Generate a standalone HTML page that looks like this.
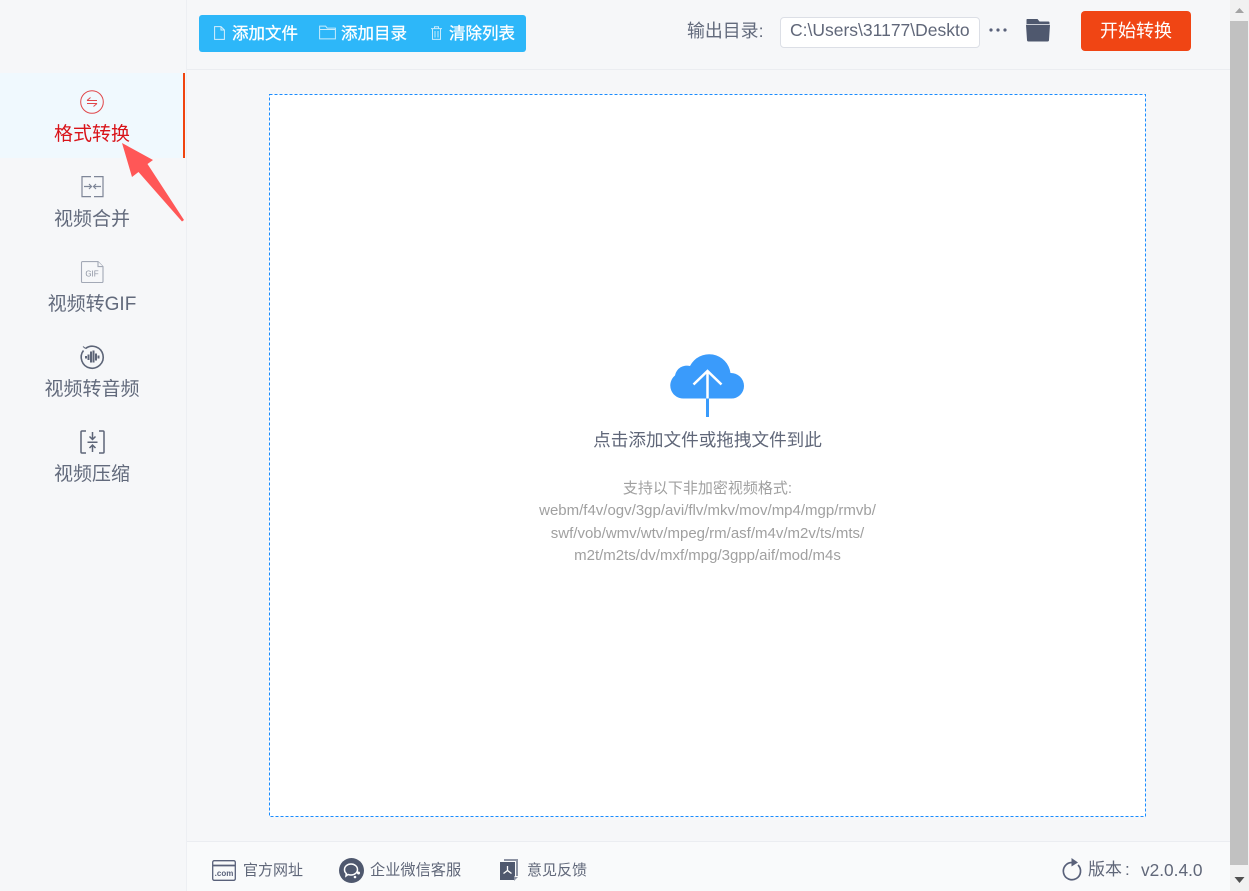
<!DOCTYPE html>
<html lang="zh-CN">
<head>
<meta charset="utf-8">
<title>格式转换</title>
<style>
html,body{margin:0;padding:0;width:1249px;height:891px;overflow:hidden;background:#f6f7f9}
body{position:relative;font-family:"Liberation Sans","Noto Sans CJK SC",sans-serif;color:#606779}
.a{position:absolute;white-space:nowrap}
.nav{position:absolute;left:0;width:184px;text-align:center;font-size:19px;line-height:26px;color:#626a7c}
.tb{position:absolute;white-space:nowrap;top:24px;font-size:16.500px;line-height:20px;color:#fff;-webkit-text-stroke:.3px #fff}
.ft{position:absolute;white-space:nowrap;top:861px;font-size:15px;line-height:20px;color:#606779}
svg{position:absolute;overflow:visible}
</style>
</head>
<body>
<!-- sidebar -->
<div class="a" style="left:186px;top:0;width:1px;height:891px;background:#edeff3"></div>
<div class="a" style="left:0;top:73px;width:183px;height:85px;background:#f0f9fe"></div>
<div class="a" style="left:183px;top:73px;width:2px;height:85px;background:#f0440f"></div>

<svg style="left:80px;top:90px" width="24" height="24" viewBox="0 0 24 24" fill="none" stroke="#e0474a" stroke-width="1"><circle cx="12" cy="12" r="11.300"/><path d="M7 10.500H17M7 10.500l3.500-3M17 13.500H7M17 13.500l-3.500 3"/></svg>
<div class="nav" style="top:122px;color:#d9141a">格式转换</div>

<svg style="left:81px;top:176px" width="23" height="22" viewBox="0 0 23 22" fill="none" stroke="#7e8698" stroke-width="1.200"><path d="M10 .6H1v20h9M13 .6h9v20h-9"/><path d="M3 10.500h7.500M8 8l2.500 2.500L8 13M20 10.500h-7.500M15 8l-2.500 2.500L15 13"/></svg>
<div class="nav" style="top:207px">视频合并</div>

<svg style="left:81px;top:261px" width="23" height="22" viewBox="0 0 23 22" fill="#f6f7f9" stroke="#a3a9b6" stroke-width="1.100"><path d="M1.500.6H17l5 5v14.900a1 1 0 0 1-1 1H1.500a1 1 0 0 1-1-1V1.600a1 1 0 0 1 1-1z"/><path d="M17 .6v5h5"/><text x="11" y="15.500" text-anchor="middle" font-family="Liberation Sans" font-size="8" fill="#8b92a1" stroke="none">GIF</text></svg>
<div class="nav" style="top:292px">视频转GIF</div>

<svg style="left:80px;top:345px" width="24" height="24" viewBox="0 0 24 24" fill="none" stroke="#5d6578" stroke-width="1.600"><path d="M5.500 3.500A11 11 0 1 1 3.500 5.500"/><path d="M3 1.500l2.500 2" stroke-width="1"/><path d="M6 11v2.500M8.500 9.500v5.500M11 6.500v11M13.500 5.500v12M16 8.500v7M18.500 10.500v3" stroke-width="2"/></svg>
<div class="nav" style="top:377px">视频转音频</div>

<svg style="left:80px;top:430px" width="25" height="24" viewBox="0 0 25 24" fill="none" stroke="#5d6578" stroke-width="1.500"><path d="M6 1H2a1 1 0 0 0-1 1v20a1 1 0 0 0 1 1h4M19 1h4a1 1 0 0 1 1 1v20a1 1 0 0 1-1 1h-4"/><path d="M12.500 2v7M9.500 6.500l3 3 3-3M12.500 22v-6.500M9.500 18l3-3 3 3M7.500 12.300h10"/></svg>
<div class="nav" style="top:462px">视频压缩</div>

<!-- arrow annotation -->
<svg style="left:0;top:0" width="200" height="240" viewBox="0 0 200 240"><path d="M122 143L153 160L147.500 164L184 220L182 221.500L138.500 172L132 177Z" fill="#ff5757"/></svg>

<!-- header -->
<div class="a" style="left:187px;top:69px;width:1043px;height:1px;background:#ebedf1"></div>
<div class="a" style="left:199px;top:15px;width:327px;height:37px;background:#2db7f9;border-radius:3px"></div>
<svg style="left:214px;top:26px" width="11" height="14" viewBox="0 0 11 14" fill="none" stroke="#d6f0fd" stroke-width="1"><path d="M.6.6h6.400l3.400 3.400v9.400H.6zM7 .6V4h3.400"/></svg>
<div class="tb" style="left:232px">添加文件</div>
<svg style="left:319px;top:25px" width="17" height="15" viewBox="0 0 17 15" fill="none" stroke="#c8ebfc" stroke-width="1"><path d="M.6 13.900V1.100h6l1.500 2h8.300v10.800zM.6 4.500h15.800"/></svg>
<div class="tb" style="left:341px">添加目录</div>
<svg style="left:431px;top:26px" width="11" height="14" viewBox="0 0 11 14" fill="none" stroke="#c8ebfc" stroke-width="1"><path d="M0 2.600h11M3.500 2.600V.8h4v1.800M1.500 3v10.400h8V3M4 5v6.500M7 5v6.500"/></svg>
<div class="tb" style="left:449px">清除列表</div>

<div class="a" style="left:687px;top:19px;font-size:17.900px;line-height:24px;color:#626a7c">输出目录:</div>
<div class="a" style="left:780px;top:17px;width:198px;height:29px;background:#fff;border:1px solid #dcdfe6;border-radius:4px"></div>
<div class="a" style="left:790px;top:18px;width:180px;overflow:hidden;font-size:17.500px;line-height:24px;color:#606779">C:\Users\31177\Deskto</div>
<svg style="left:989px;top:27px" width="18" height="5" viewBox="0 0 18 5" fill="#59617a"><circle cx="2" cy="3" r="1.600"/><circle cx="9" cy="3" r="1.600"/><circle cx="16" cy="3" r="1.600"/></svg>
<svg style="left:1025px;top:19px" width="26" height="23" viewBox="0 0 26 23"><path d="M2 0h10.500l2 2.500H23.500a1 1 0 0 1 1 1V5H1.500V.5z" fill="#4f586e"/><path d="M1 5.700h24l-1 15.300a1.500 1.500 0 0 1-1.500 1.500H3.500A1.500 1.500 0 0 1 2 21z" fill="#4f586e"/></svg>
<div class="a" style="left:1081px;top:11px;width:110px;height:40px;background:#f04514;border-radius:4px;text-align:center;font-size:18px;line-height:40px;color:#fff">开始转换</div>

<!-- drop area -->
<svg style="left:0;top:0" width="1249" height="891" viewBox="0 0 1249 891"><rect x="269.500" y="94.500" width="876" height="722" fill="#fff" stroke="#1a8cff" stroke-width="1" stroke-dasharray="3 2" shape-rendering="crispEdges"/></svg>
<svg style="left:670px;top:354px" width="75" height="64" viewBox="0 0 75 64"><path d="M14 44.500A13 13 0 0 1 5 21.500 12 12 0 0 1 20 12 21.500 21.500 0 0 1 60.500 19 13 13 0 0 1 74 32 12.500 12.500 0 0 1 61 44.500Z" fill="#3a9bfb"/><path d="M37.500 63V44" stroke="#3a9bfb" stroke-width="3" fill="none"/><path d="M37.500 44.500V17M23.500 30.500L37.500 17 51.500 30.500" stroke="#fff" stroke-width="2.500" fill="none"/></svg>
<div class="a" style="left:269px;top:429px;width:877px;text-align:center;font-size:17.600px;line-height:22px;color:#606779">点击添加文件或拖拽文件到此</div>
<div class="a" style="left:269px;top:478px;width:877px;text-align:center;font-size:15px;line-height:22.400px;color:#a0a0a0">支持以下非加密视频格式:<br>webm/f4v/ogv/3gp/avi/flv/mkv/mov/mp4/mgp/rmvb/<br>swf/vob/wmv/wtv/mpeg/rm/asf/m4v/m2v/ts/mts/<br>m2t/m2ts/dv/mxf/mpg/3gpp/aif/mod/m4s</div>

<!-- footer -->
<div class="a" style="left:187px;top:841px;width:1043px;height:50px;background:#f9fafb;border-top:1px solid #ebedf1;box-sizing:border-box"></div>
<svg style="left:212px;top:860px" width="24" height="21" viewBox="0 0 24 21" fill="none" stroke="#59617a" stroke-width="1.300"><rect x=".7" y=".7" width="22.600" height="19.600" rx="1.500"/><path d="M.7 5.500h22.600" stroke-width="1.800"/><text x="12" y="16" text-anchor="middle" font-family="Liberation Sans" font-size="8" font-weight="bold" fill="#59617a" stroke="none">.com</text></svg>
<div class="ft" style="left:243px">官方网址</div>
<svg style="left:339px;top:858px" width="25" height="25" viewBox="0 0 25 25"><circle cx="12.500" cy="12.500" r="12.500" fill="#4f586e"/><path d="M5.500 11.500c0-3.200 3-5.500 6.500-5.500s6.500 2.300 6.500 5.500-3 5.500-6.500 5.500c-1 0-2-.2-3-.5l-2 1.500.3-2.500C6 14.500 5.500 13 5.500 11.500z" fill="none" stroke="#fff" stroke-width="1.500"/><circle cx="19.500" cy="15" r="1.500" fill="#fff"/><circle cx="16" cy="19" r="1.300" fill="#fff"/></svg>
<div class="ft" style="left:370px;font-size:15.200px">企业微信客服</div>
<svg style="left:500px;top:859px" width="19" height="23" viewBox="0 0 19 23"><path d="M4 0h14v17h-2V2H4z" fill="#8d93a3"/><path d="M0 3h15v14l-1 1v3H0z" fill="#4f586e"/><path d="M14 18h4l-4 4z" fill="#8d93a3"/><path d="M7.500 7v4.500M7.500 11.500l-4 3M7.500 11.500l4 3" stroke="#fff" stroke-width="1.300" fill="none"/></svg>
<div class="ft" style="left:527px">意见反馈</div>

<svg style="left:1061px;top:858px" width="20" height="22" viewBox="0 0 20 22" fill="none"><path d="M11 4.500A8.600 8.600 0 1 0 17 7" stroke="#59617a" stroke-width="1.700"/><path d="M10.500 0l6.500 4.500-6.500 4z" fill="#59617a"/></svg>
<div class="a" style="left:1088px;top:859px;font-size:17px;line-height:22px;color:#606779">版本<span style="margin-left:3px">:</span></div>
<div class="a" style="left:1141px;top:859px;font-size:17.300px;line-height:22px;color:#606779">v2.0.4.0</div>

<!-- scrollbar -->
<div class="a" style="left:1230px;top:0;width:19px;height:891px;background:#f1f1f1"></div>
<div class="a" style="left:1230px;top:21px;width:18px;height:844px;background:#c1c1c1"></div>
<svg style="left:1230px;top:0" width="19" height="891" viewBox="0 0 19 891"><path d="M5 13L9.500 8 14 13Z" fill="#a3a3a3"/><path d="M4.500 877H14.500L9.500 883Z" fill="#505050"/></svg>
</body>
</html>
